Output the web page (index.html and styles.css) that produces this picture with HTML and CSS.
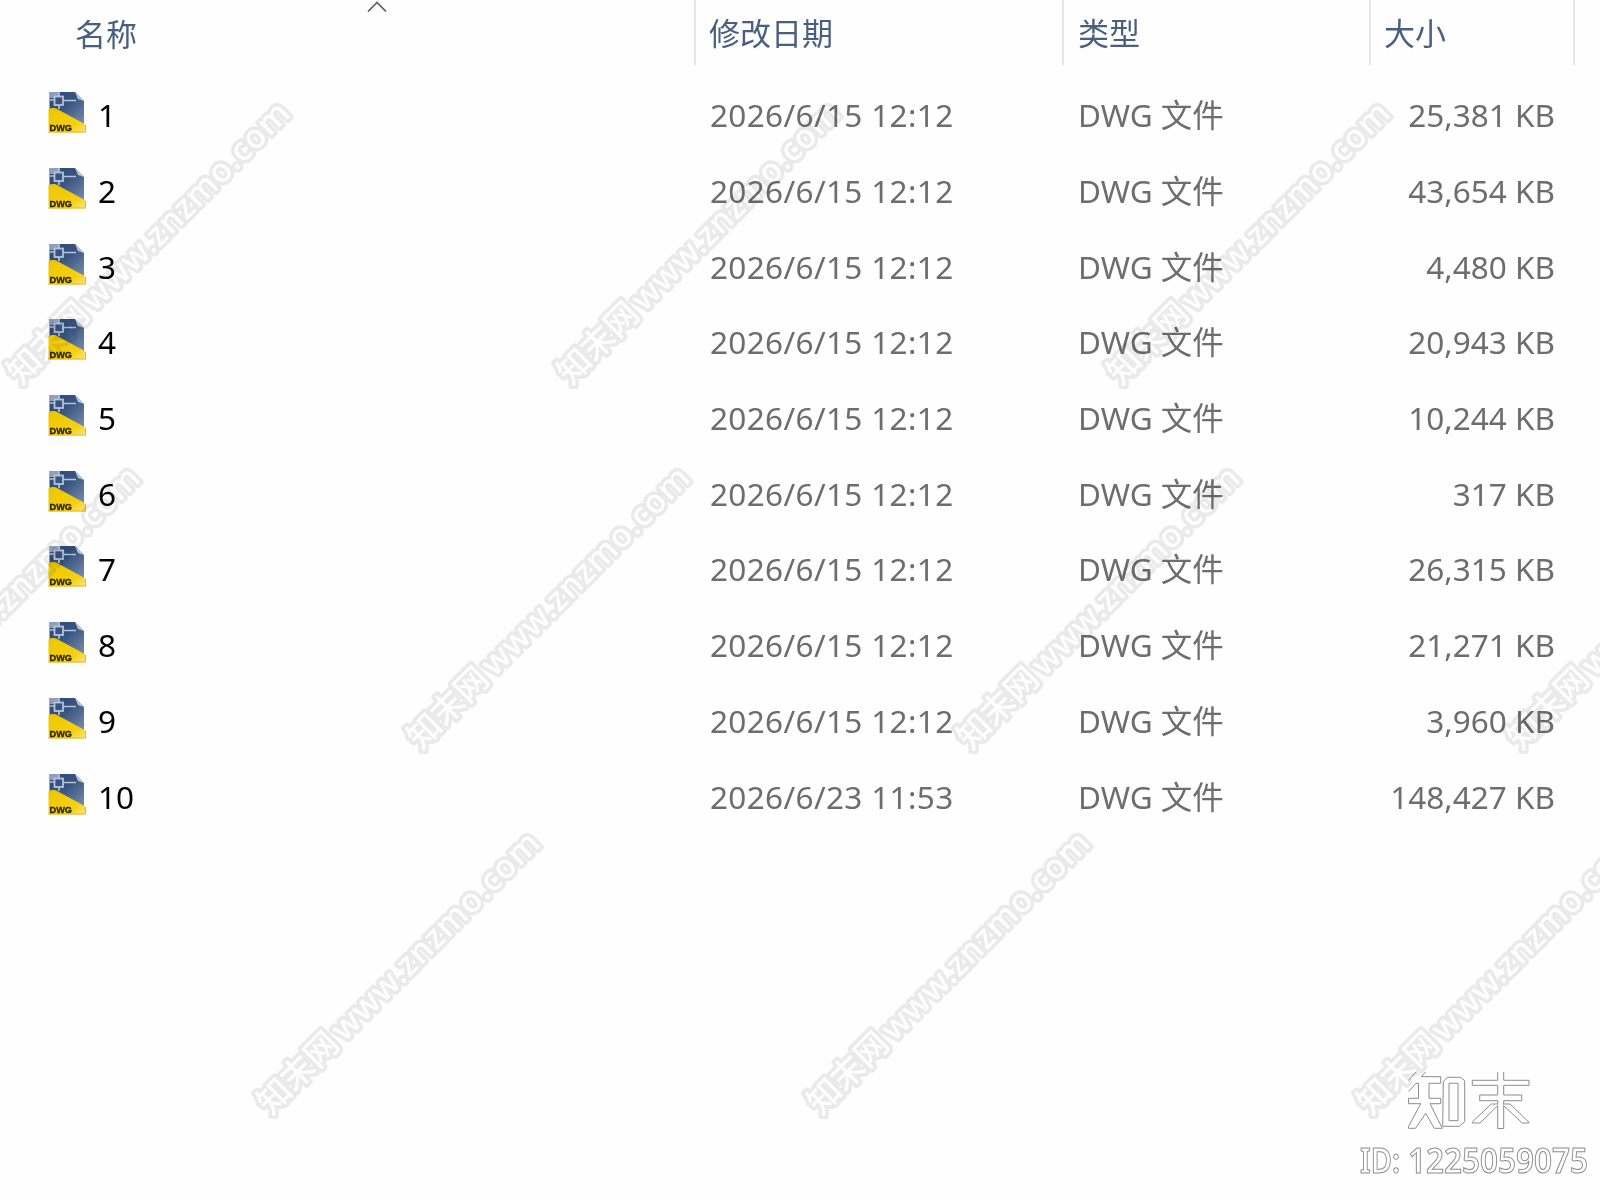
FILE: index.html
```
<!DOCTYPE html>
<html lang="zh-CN">
<head>
  <meta charset="UTF-8">
  <meta name="viewport" content="width=device-width, initial-scale=1.0">
  <title>DWG 文件</title>
  <link rel="stylesheet" href="styles.css">
</head>
<body>
  <svg class="defs" width="0" height="0">
    <defs>
      <linearGradient id="blue" x1="0" y1="0" x2="1" y2="1">
        <stop offset="0" stop-color="#2c4774"/>
        <stop offset="0.45" stop-color="#38547f"/>
        <stop offset="1" stop-color="#7a8fb0"/>
      </linearGradient>
      <linearGradient id="yellow" x1="0" y1="0" x2="1" y2="1">
        <stop offset="0" stop-color="#ecc500"/>
        <stop offset="0.7" stop-color="#f6d110"/>
        <stop offset="1" stop-color="#fbe78a"/>
      </linearGradient>
      <symbol id="dwg" viewBox="0 0 38 42">
        <path d="M1.500 1H27L36 10V34L1.500 18Z" fill="url(#blue)"/>
        <path d="M27 1L36 10L30 8Z" fill="#b9c6da"/>
        <path d="M1.500 1H11V7H1.500Z" fill="#aebcd4" opacity="0.75"/>
        <path d="M11 1V5M11 14V18M2 9H7M15.500 9.500H28" fill="none" stroke="#b4c2da" stroke-width="1.700"/>
        <rect x="6.500" y="5.500" width="8.500" height="8.500" fill="#3a5482" stroke="#b4c2da" stroke-width="1.800"/>
        <path d="M0.500 18Q6 16 10 18.500L34 31.500L38 34V41.500H0.500Z" fill="url(#yellow)"/>
        <path d="M0.500 41H37.500V34" fill="none" stroke="#e0b92a" stroke-width="1"/>
        <text x="1.500" y="39.500" class="dwg-label" textLength="22.500" lengthAdjust="spacingAndGlyphs">DWG</text>
      </symbol>
      <g id="mark" class="mark">
        <text class="mark-line" x="0" y="0" textLength="99">知末网</text>
        <text class="mark-line" x="104" y="0" textLength="279">www.znzmo.com</text>
        <text class="mark-fill" x="0" y="0" textLength="99">知末网</text>
        <text class="mark-fill" x="104" y="0" textLength="279">www.znzmo.com</text>
      </g>
    </defs>
  </svg>

  <main class="explorer">
    <header class="row head">
      <div class="name">名称
        <svg class="sort" width="20" height="12" viewBox="0 0 20 12"><path d="M1 11.500L10 2.500L19 11.500" fill="none" stroke="#606060" stroke-width="1.700"/></svg>
      </div>
      <div class="date">修改日期</div>
      <div class="type">类型</div>
      <div class="size">大小</div>
    </header>
    <div class="files" id="files"></div>
  </main>

  <svg class="watermark" width="1600" height="1200" id="watermark"></svg>

  <div class="brand">
    <svg class="brand-logo" width="124" height="60" viewBox="0 0 124 60">
      <path d="M8 1L0.500 9.500M17.500 1L13.300 5.700H32.700V12.300H21V27.300H32.700V32.700H22L34.300 57.300H26.300L17.700 42.300L7.500 57.300H0.500V55.500L12.700 32.700H0.500V27.300H10.500V12.300H8L0.500 20.500"/>
      <path d="M35.300 10.700L39.300 6.300H52.700L56.700 9.700V50.700L51.300 55.300H34.700ZM41 12.300V49.700H50V12.300Z"/>
      <path d="M89.700 1V9.300H64.300V14.300H89.700V24H71.700V29.700H89.700V57.500H95.700V29.700H113.700V24H95.700V14.300H121V9.300H95.700V1"/>
      <path d="M89.700 33H83.300L64.300 51V52H72L89.700 34.700M95.700 33H102L121 51.300V52H114.300L95.700 34.700"/>
    </svg>
    <svg class="brand-id" width="236" height="40">
      <text x="0" y="29" textLength="40" lengthAdjust="spacingAndGlyphs">ID:</text>
      <text x="48" y="29" textLength="180" lengthAdjust="spacingAndGlyphs">1225059075</text>
    </svg>
  </div>

  <script src="script.js"></script>
</body>
</html>
```
FILE: styles.css
```
* {
  margin: 0;
  padding: 0;
  box-sizing: border-box;
}

body {
  width: 1600px;
  height: 1200px;
  overflow: hidden;
  position: relative;
  background: #fefefe;
  color: #6d6d6d;
  font-family: "Noto Sans", "Noto Sans CJK SC", sans-serif;
  font-size: 31.5px;
}

.defs {
  position: absolute;
}

.explorer {
  height: 1200px;
}

.row {
  display: flex;
  align-items: center;
  height: 75.7px;
  line-height: 42px;
  white-space: nowrap;
}

.name {
  width: 696px;
  display: flex;
  align-items: center;
}

.date {
  width: 368px;
  padding-left: 14px;
}

.type {
  width: 307px;
  padding-left: 14px;
}

.size {
  width: 204px;
}

.files .date {
  letter-spacing: 0.35px;
}

.head {
  height: 65px;
  color: #48607f;
  font-family: "Noto Sans CJK SC", sans-serif;
  font-size: 31px;
}

.head > div {
  height: 65px;
  line-height: 64px;
  border-right: 2px solid #e5e5e5;
}

.head .name {
  position: relative;
  padding-left: 75px;
}

.head .date {
  padding-left: 13px;
}

.head .size {
  padding-left: 13px;
}

.sort {
  position: absolute;
  left: 367px;
  top: 0;
}

.files {
  padding-top: 12.5px;
}

.files .name {
  padding-left: 48px;
  color: #000;
}

.files .size {
  padding-right: 20px;
  text-align: right;
}

.icon {
  width: 38px;
  height: 42px;
  margin: -6px 12px 0 0;
}

.dwg-label {
  font: bold 9.5px "Liberation Sans", sans-serif;
  fill: #282400;
  stroke: #282400;
  stroke-width: 0.3px;
}

.watermark {
  position: absolute;
  left: 0;
  top: 0;
  mix-blend-mode: multiply;
}

.mark {
  font-family: "Noto Sans", "Noto Sans CJK SC", sans-serif;
  font-size: 33px;
  font-weight: 500;
}

.mark-line {
  fill: #ebebeb;
  stroke: #ebebeb;
  stroke-width: 7px;
  stroke-linejoin: round;
}

.mark-fill {
  fill: #fff;
}

.brand {
  position: absolute;
  left: 1360px;
  top: 1071px;
  width: 236px;
}

.brand svg {
  display: block;
  overflow: visible;
}

.brand-logo {
  margin-left: 48px;
  fill: #fff;
  fill-rule: evenodd;
  stroke: #8c8c8c;
  stroke-width: 1px;
}

.brand-id {
  margin-top: 13px;
  fill: #fff;
  stroke: #8c8c8c;
  stroke-width: 1px;
  font: 600 33.5px "Noto Sans", sans-serif;
}
```
FILE: script.js
```
const files = [
  ["1", "2026/6/15 12:12", "25,381 KB"],
  ["2", "2026/6/15 12:12", "43,654 KB"],
  ["3", "2026/6/15 12:12", "4,480 KB"],
  ["4", "2026/6/15 12:12", "20,943 KB"],
  ["5", "2026/6/15 12:12", "10,244 KB"],
  ["6", "2026/6/15 12:12", "317 KB"],
  ["7", "2026/6/15 12:12", "26,315 KB"],
  ["8", "2026/6/15 12:12", "21,271 KB"],
  ["9", "2026/6/15 12:12", "3,960 KB"],
  ["10", "2026/6/23 11:53", "148,427 KB"]
];

document.getElementById("files").innerHTML = files.map(([name, date, size]) => `
  <div class="row">
    <div class="name"><svg class="icon"><use href="#dwg"/></svg>${name}</div>
    <div class="date">${date}</div>
    <div class="type">DWG 文件</div>
    <div class="size">${size}</div>
  </div>`).join("");

// start of the baseline of each diagonal mark
const marks = [
  [21, 386], [571, 386], [1121, 386],
  [-129, 751], [421, 751], [971, 751], [1521, 751],
  [271, 1116], [821, 1116], [1371, 1116]
];

document.getElementById("watermark").innerHTML = marks.map(([x, y]) =>
  `<use href="#mark" transform="translate(${x} ${y}) rotate(-45)"/>`).join("");
```
